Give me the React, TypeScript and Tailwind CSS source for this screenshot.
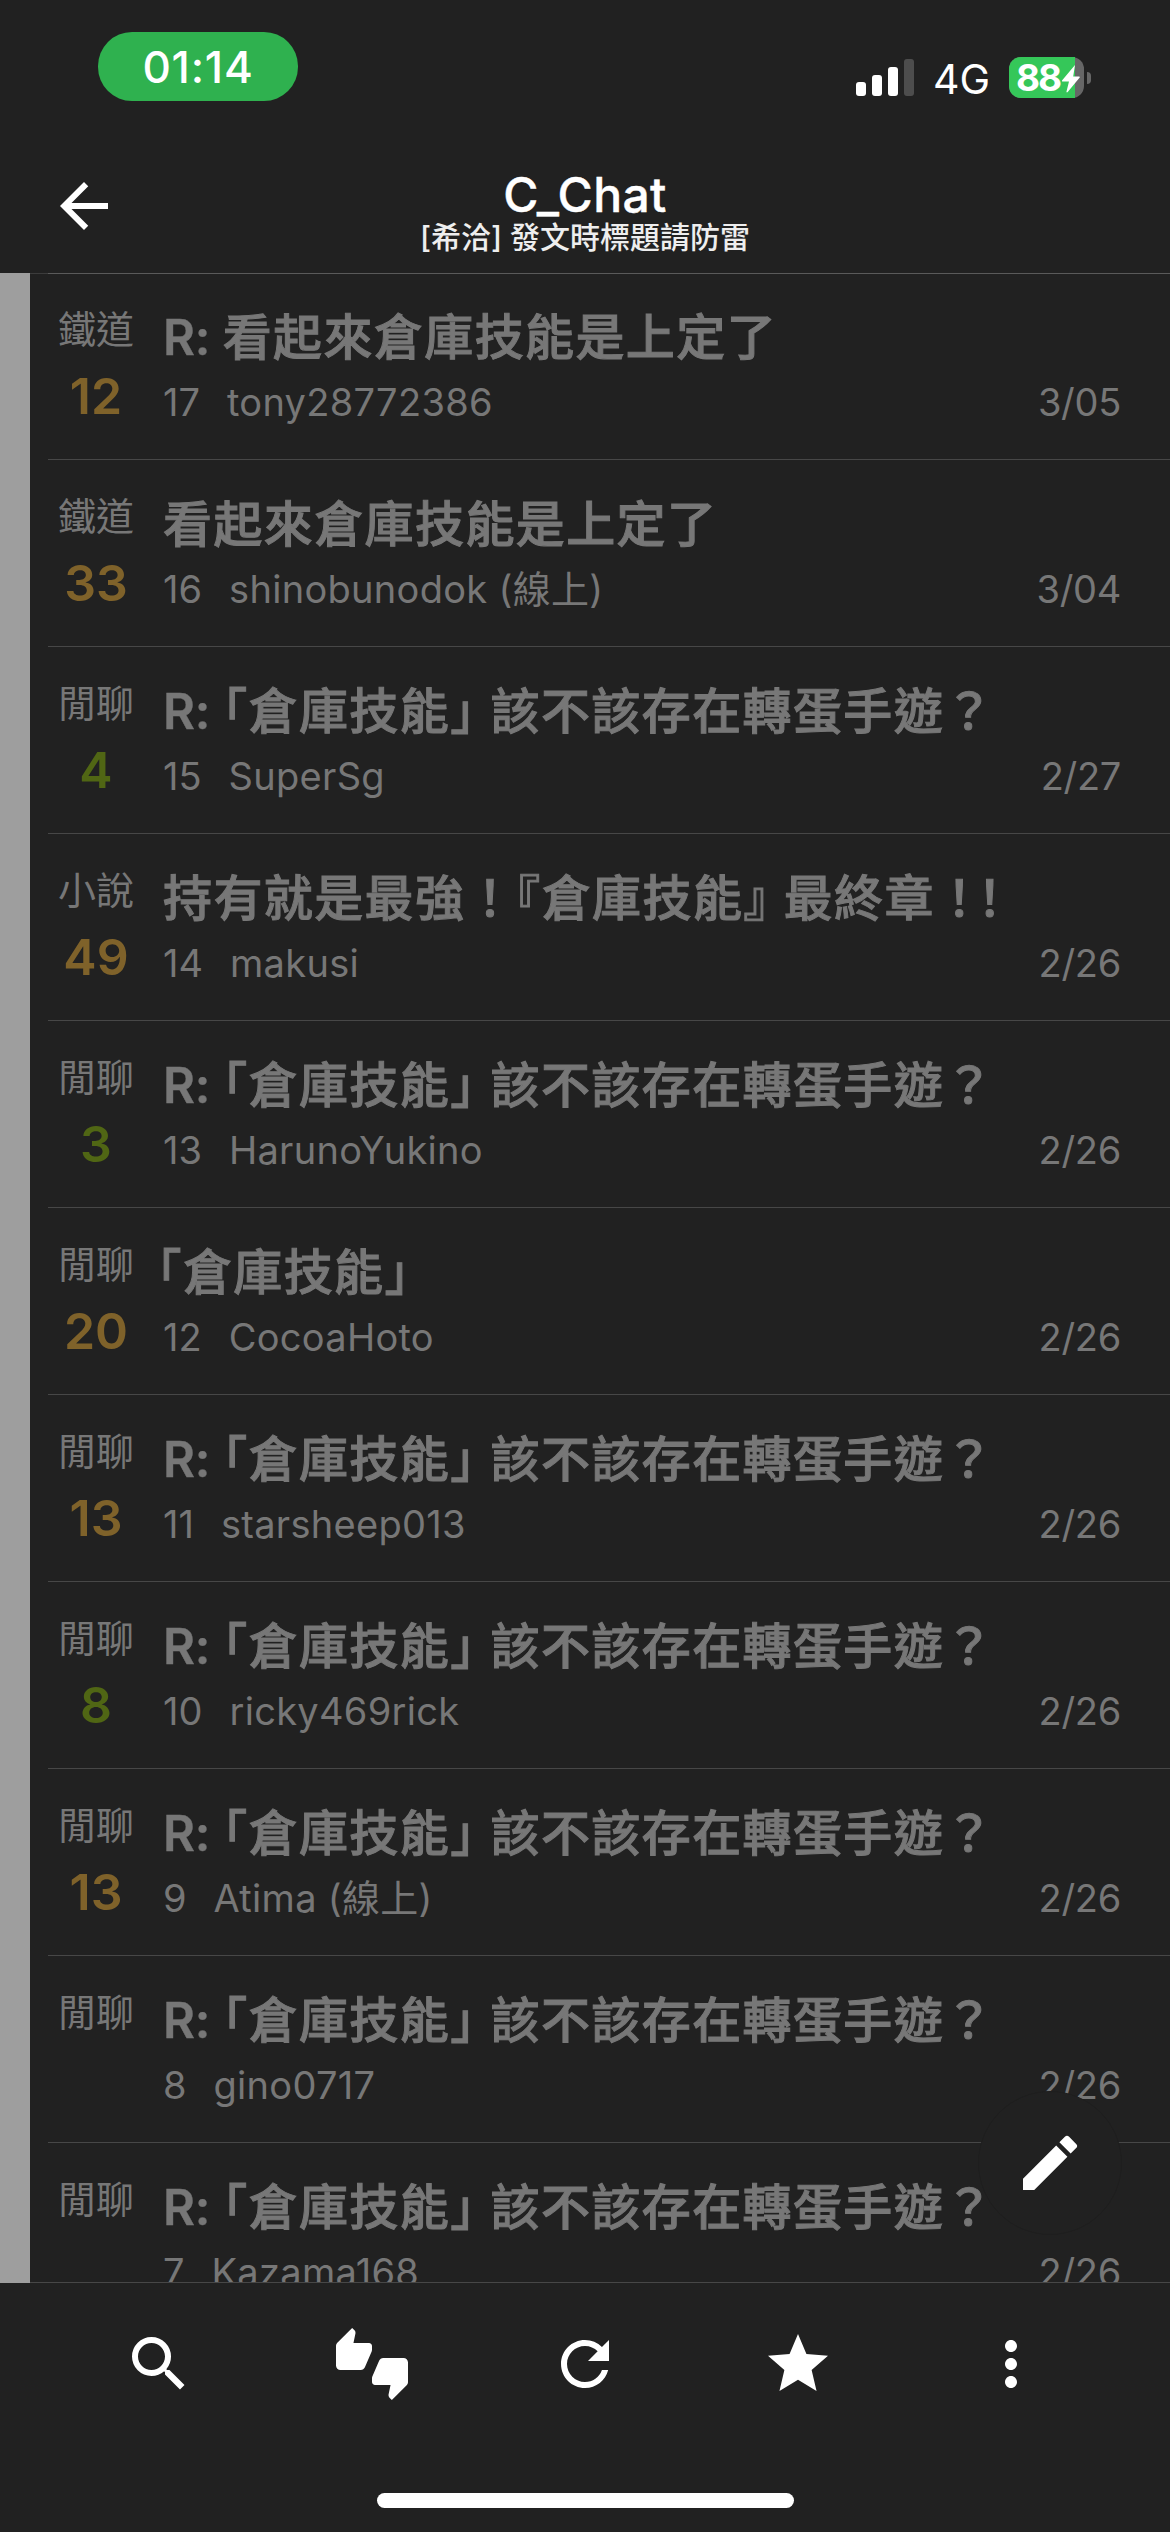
import { MdArrowBack, MdEdit, MdMoreVert, MdRefresh, MdSearch, MdStar, MdThumbsUpDown } from 'react-icons/md'

type Post = {
  tag: string
  count: number
  title: string
  index: number
  author: string
  date: string
}

const posts: Post[] = [
  { tag: '鐵道', count: 12, title: 'R: 看起來倉庫技能是上定了', index: 17, author: 'tony28772386', date: '3/05' },
  { tag: '鐵道', count: 33, title: '看起來倉庫技能是上定了', index: 16, author: 'shinobunodok (線上)', date: '3/04' },
  { tag: '閒聊', count: 4, title: 'R: 「倉庫技能」 該不該存在轉蛋手遊？', index: 15, author: 'SuperSg', date: '2/27' },
  { tag: '小說', count: 49, title: '持有就是最強！『倉庫技能』 最終章！！', index: 14, author: 'makusi', date: '2/26' },
  { tag: '閒聊', count: 3, title: 'R: 「倉庫技能」 該不該存在轉蛋手遊？', index: 13, author: 'HarunoYukino', date: '2/26' },
  { tag: '閒聊', count: 20, title: '「倉庫技能」', index: 12, author: 'CocoaHoto', date: '2/26' },
  { tag: '閒聊', count: 13, title: 'R: 「倉庫技能」 該不該存在轉蛋手遊？', index: 11, author: 'starsheep013', date: '2/26' },
  { tag: '閒聊', count: 8, title: 'R: 「倉庫技能」 該不該存在轉蛋手遊？', index: 10, author: 'ricky469rick', date: '2/26' },
  { tag: '閒聊', count: 13, title: 'R: 「倉庫技能」 該不該存在轉蛋手遊？', index: 9, author: 'Atima (線上)', date: '2/26' },
  { tag: '閒聊', count: 0, title: 'R: 「倉庫技能」 該不該存在轉蛋手遊？', index: 8, author: 'gino0717', date: '2/26' },
  { tag: '閒聊', count: 0, title: 'R: 「倉庫技能」 該不該存在轉蛋手遊？', index: 7, author: 'Kazama168', date: '2/26' },
]

// corner brackets and a doubled "！" are set half width, the reply prefix is bolder
function Title({ text }: { text: string }) {
  return (
    <>
      {text.split(/(R: |[「」『』]|！！)/).map((part, i) => {
        if (i % 2 === 0) return part
        if (part === 'R: ') return <span key={i} className="font-semibold tracking-[-0.1px] [-webkit-text-stroke:0.4px_#777]">{part}</span>
        if (part === '！！') return <span key={i} className="ml-3 tracking-[6px] [font-feature-settings:'halt']">{part}</span>
        return (
          <span
            key={i}
            className={`[font-feature-settings:'halt'] [text-spacing-trim:space-all] ${text.startsWith('「') && i === 1 ? '-ml-1.5' : ''}`}
          >
            {part}
          </span>
        )
      })}
    </>
  )
}

function StatusBar() {
  return (
    <div className="h-[141px] shrink-0 flex justify-between items-start pl-[98px] pr-[79px]">
      <div className="mt-8 w-[200px] h-[69px] rounded-[34px] bg-[#2fb14f] flex items-center justify-center text-[44px] leading-none font-medium tracking-[0.8px] text-white">
        01:14
      </div>
      <div className="mt-[57px] h-[41px] flex items-center">
        <div className="flex items-end gap-1.5 h-[37px] mr-[19px]">
          <div className="w-2.5 h-3.5 rounded-[3px] bg-white" />
          <div className="w-2.5 h-[21px] rounded-[3px] bg-white" />
          <div className="w-2.5 h-[29px] rounded-[3px] bg-white" />
          <div className="w-2.5 h-[37px] rounded-[3px] bg-[#4d4d4d]" />
        </div>
        <div className="w-[57px] mr-[19px] pt-[3px] text-[41px] leading-[41px] text-white">4G</div>
        <div className="relative w-[75px] h-[41px] rounded-xl bg-[#666]">
          <div className="w-[66px] h-full rounded-l-xl bg-[#35c759] pl-[7px] text-[37px] leading-[41px] font-bold tracking-[-2px] text-white">
            88
          </div>
          <svg className="absolute left-[53px] top-2" width="18" height="28" viewBox="0 0 18 28" fill="#fff">
            <path d="M13 0 0 15.5c-.3.5 0 1 .5 1H7L4.500 26.500c-.2 1 .6 1.300 1.200.6L17.700 12.500c.3-.5 0-1-.5-1h-6z" />
          </svg>
        </div>
        <div className="ml-[3px] w-1 h-3 rounded-r-full bg-[#666]" />
      </div>
    </div>
  )
}

function Header() {
  return (
    <div className="h-[132px] shrink-0 grid grid-cols-[1fr_auto_1fr] text-white">
      <MdArrowBack className="ml-12 mt-[29px] size-[72px]" />
      <div className="pt-[26px] text-center">
        <div className="text-[48px] leading-[56px] font-medium tracking-[0.4px] [-webkit-text-stroke:0.4px_#fff]">C_Chat</div>
        <div className="-mt-1 text-[30px] leading-9 font-medium text-[#eee]">[希洽] 發文時標題請防雷</div>
      </div>
    </div>
  )
}

function Row({ post }: { post: Post }) {
  return (
    <li className="h-[187px] shrink-0 ml-[18px] border-b border-[#474747] flex text-[#777]">
      <div className="w-24 pt-8 text-center">
        <div className="text-[38px] leading-[48px]">{post.tag}</div>
        {post.count > 0 && (
          <div className={`mt-[15px] text-[50px] leading-[56px] font-semibold ${post.count >= 10 ? 'text-[#7f622a]' : 'text-[#506614]'}`}>
            {post.count}
          </div>
        )}
      </div>
      <div className="flex-1 ml-[19px] pt-[37px] pr-[49px] whitespace-nowrap">
        <div className="text-[49px] leading-[56px] font-medium tracking-[1.4px] [-webkit-text-stroke:1px_#777]">
          <Title text={post.title} />
        </div>
        <div className="mt-3 flex text-[38px] leading-[48px]">
          <span className="mr-[27px]">{post.index}</span>
          <span className="tracking-[0.3px]">{post.author}</span>
          <span className="ml-auto tracking-[-0.3px]">{post.date}</span>
        </div>
      </div>
    </li>
  )
}

function Toolbar() {
  const icons = [MdSearch, MdThumbsUpDown, MdRefresh, MdStar, MdMoreVert]
  return (
    <div className="h-[249px] shrink-0 flex flex-col items-center text-white">
      <div className="mt-[45px] flex">
        {icons.map((Icon, i) => (
          <button key={i} className="w-[213px] flex justify-center">
            <Icon className="size-[72px]" />
          </button>
        ))}
      </div>
      <div className="mt-[93px] w-[417px] h-[15px] rounded-full bg-white" />
    </div>
  )
}

export default function App() {
  return (
    <div
      lang="zh-Hant"
      className="w-[1170px] h-[2532px] overflow-hidden bg-[#212121] flex flex-col font-['Inter','Noto_Sans_CJK_TC',sans-serif]"
    >
      <StatusBar />
      <Header />
      <div className="relative h-[2010px] shrink-0 flex overflow-hidden">
        <div className="w-[30px] shrink-0 bg-[#9e9e9e]" />
        <ul className="flex-1 flex flex-col">
          {posts.map(post => (
            <Row key={post.index} post={post} />
          ))}
        </ul>
        <div className="absolute left-[30px] right-0 top-0 h-px border-l-[18px] border-[#3c3c3c] bg-[#5a5a5a]" />
        <div className="absolute left-[30px] right-0 bottom-0 h-px bg-[#474747]" />
        <button className="absolute right-12 bottom-12 size-36 rounded-full border border-[#1e1e1e] bg-[#212121] flex items-center justify-center text-white">
          <MdEdit className="size-[72px]" />
        </button>
      </div>
      <Toolbar />
    </div>
  )
}
